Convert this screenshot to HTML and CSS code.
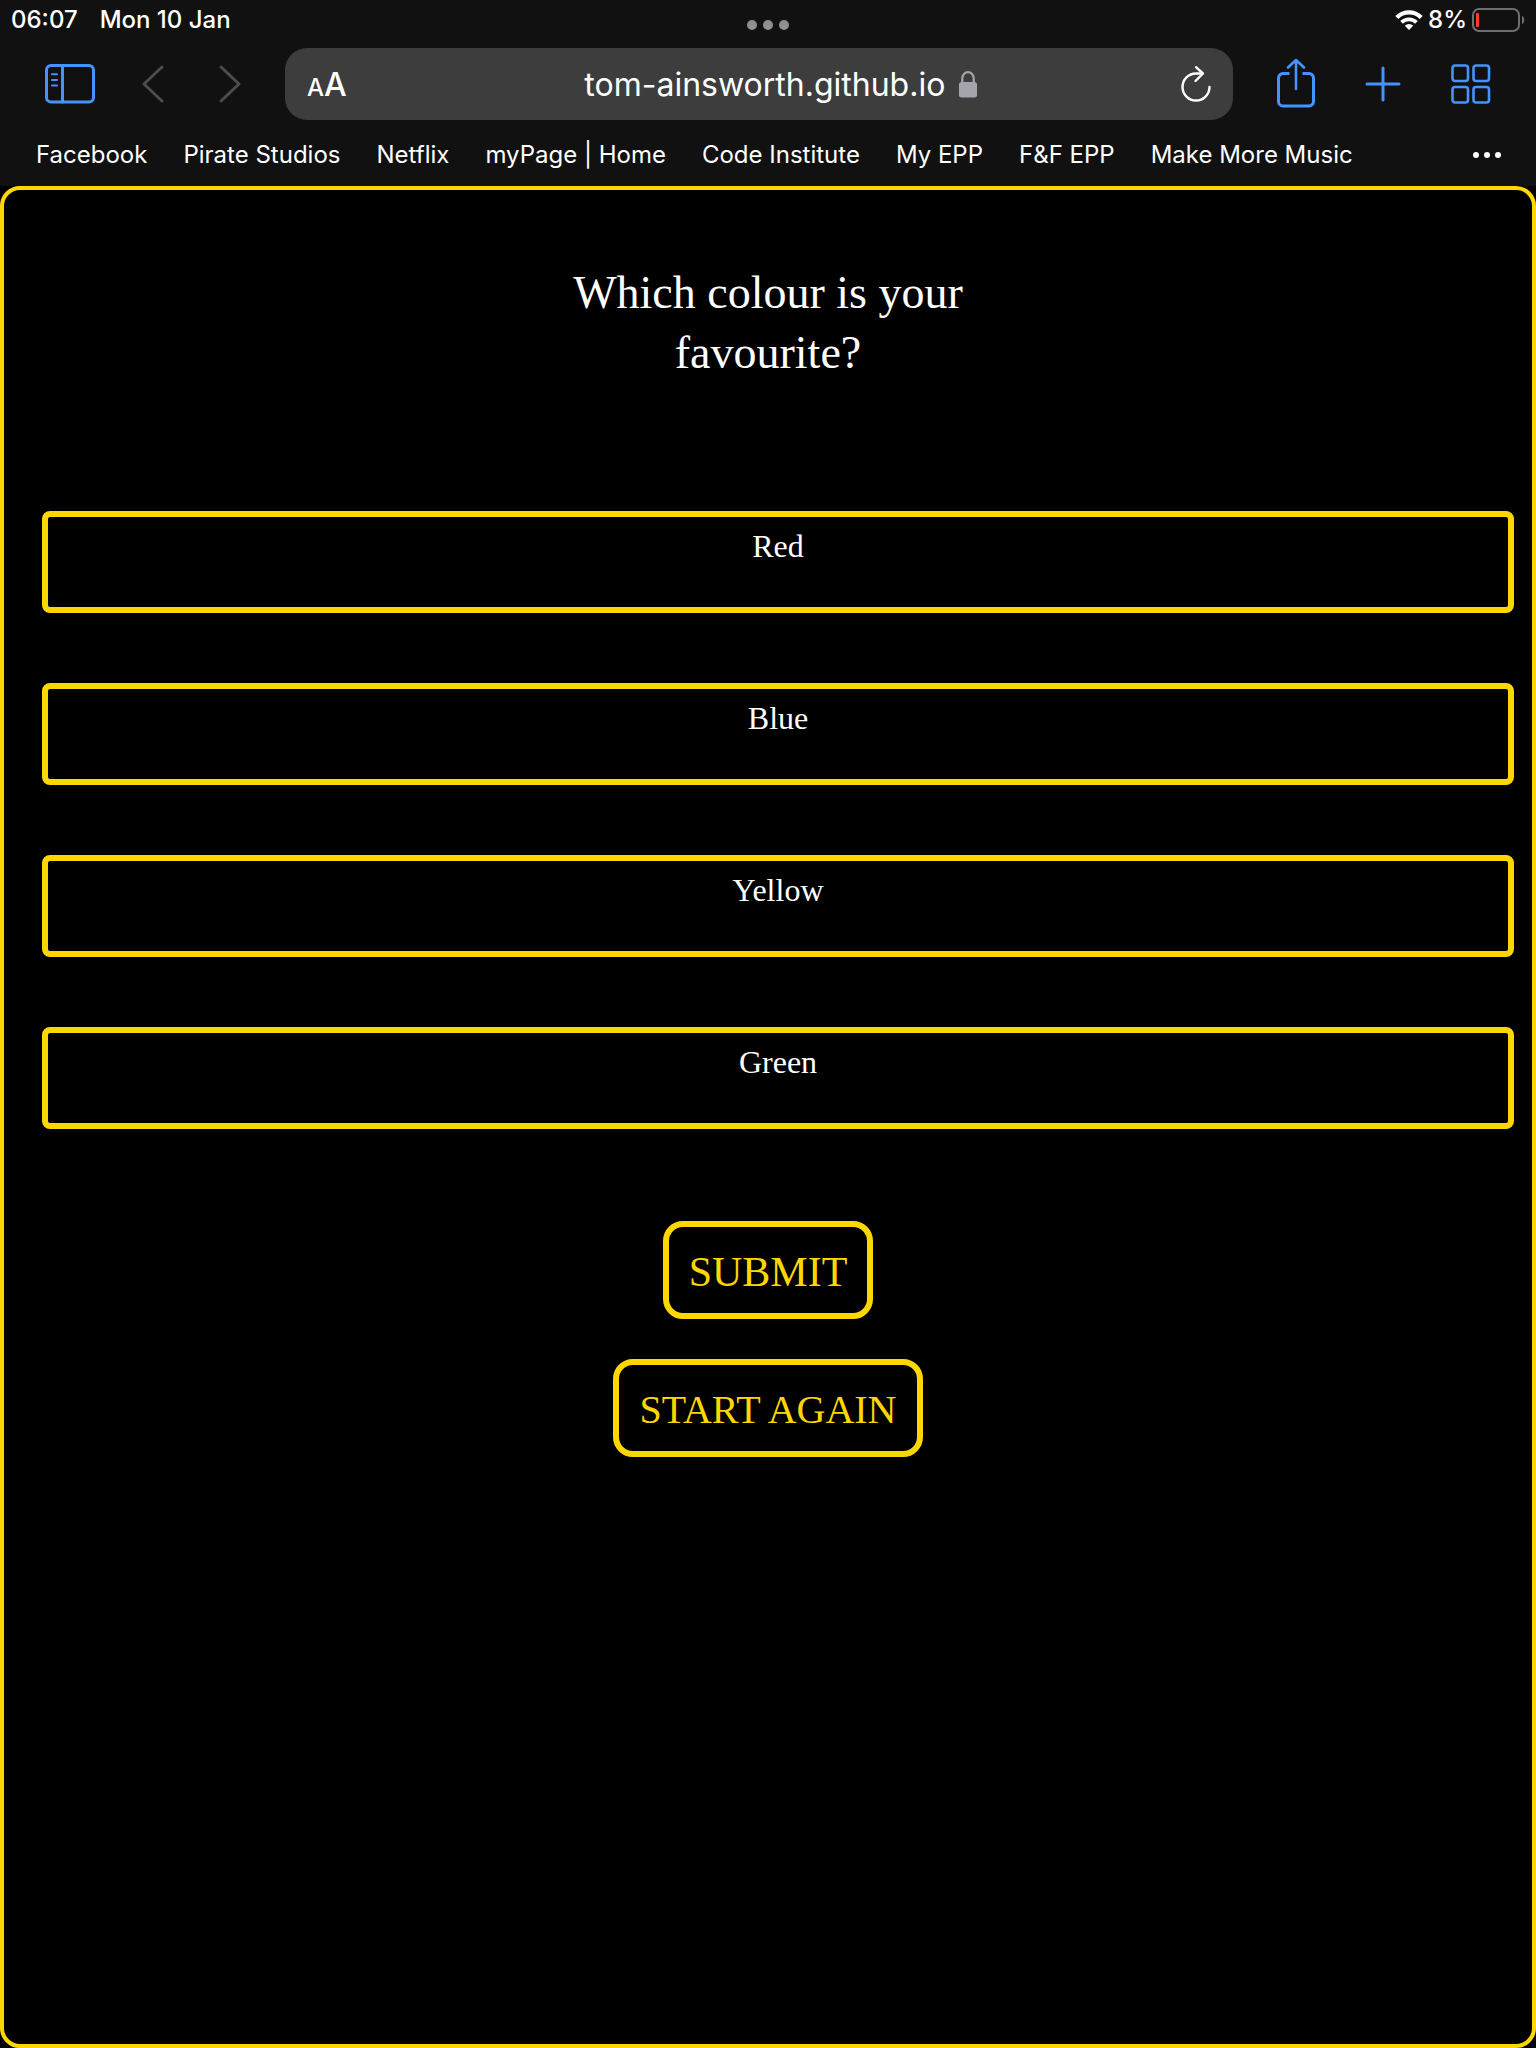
FILE: index.html
```html
<!DOCTYPE html>
<html lang="en">
<head>
<meta charset="utf-8">
<meta name="viewport" content="width=device-width, initial-scale=1">
<title>Which colour is your favourite?</title>
<link rel="stylesheet" href="styles.css">
</head>
<body>
<header class="browser">
  <div class="status">
    <div class="status-side"><span>06:07</span><span>Mon 10 Jan</span></div>
    <svg class="multitask" width="42" height="10" viewBox="0 0 42 10" fill="#8f8f8f" aria-hidden="true"><circle cx="5" cy="5" r="5"/><circle cx="21" cy="5" r="5"/><circle cx="37" cy="5" r="5"/></svg>
    <div class="status-side status-end">
      <svg width="28" height="20" viewBox="0 0 28 20" fill="none" stroke="#fff" stroke-width="4" aria-hidden="true"><path d="M1.8 7.4a17.4 17.4 0 0 1 24.4 0" stroke-width="4.2"/><path d="M6.6 12.3a10.6 10.6 0 0 1 14.8 0" stroke-width="3.8"/><path d="M14 20l-4.2-4.3a6.2 6.2 0 0 1 8.4 0z" fill="#fff" stroke="none"/></svg>
      <span>8%</span>
      <svg width="53" height="24" viewBox="0 0 53 24" aria-hidden="true"><rect x="1" y="1" width="46" height="22" rx="6" fill="none" stroke="#6f6f6f" stroke-width="2"/><rect x="4" y="5" width="3" height="14" rx="1" fill="#ff3b30"/><path d="M50 8c3 1 3 7 0 8z" fill="#6f6f6f"/></svg>
    </div>
  </div>
  <div class="toolbar">
    <div class="nav">
      <button class="tool" type="button" aria-label="Sidebar"><svg width="50" height="40" viewBox="0 0 50 40" fill="none" stroke="#4593ff" stroke-width="3" stroke-linecap="round"><rect x="1.5" y="1.5" width="47" height="36.5" rx="4.5"/><path d="M17.5 2v36"/><path d="M7 10.3h5M7 16h5M7 21.6h5" stroke-width="2"/></svg></button>
      <button class="tool" type="button" aria-label="Back"><svg width="22" height="38" viewBox="0 0 22 38" fill="none" stroke="#4c4c4c" stroke-width="3" stroke-linecap="round" stroke-linejoin="round"><path d="M20 2L2 19l18 17"/></svg></button>
      <button class="tool forward" type="button" aria-label="Forward"><svg width="22" height="38" viewBox="0 0 22 38" fill="none" stroke="#4c4c4c" stroke-width="3" stroke-linecap="round" stroke-linejoin="round"><path d="M2 2l18 17L2 36"/></svg></button>
    </div>
    <div class="address">
      <button class="tool reader" type="button" aria-label="Text size"><span class="small-a">A</span><span>A</span></button>
      <div class="url">
        <input class="url-text" type="text" aria-label="Address" value="tom-ainsworth.github.io">
        <svg width="18" height="27" viewBox="0 0 18 27" aria-hidden="true"><rect y="11" width="18" height="15.5" rx="2.5" fill="#a5a4ac"/><path d="M3.3 12V7.5a5.7 6.3 0 0 1 11.4 0V12" fill="none" stroke="#a5a4ac" stroke-width="2.2"/></svg>
      </div>
      <button class="tool" type="button" aria-label="Reload"><svg width="30" height="38" viewBox="0 0 30 38" fill="none" stroke="#fff" stroke-width="2.4" stroke-linecap="round" stroke-linejoin="round"><path d="M28.5 22A13.5 13.5 0 1 1 15 8.500H21"/><path d="M15 2.200l7 6.300-7.500 7.500"/></svg></button>
    </div>
    <div class="actions">
      <button class="tool share" type="button" aria-label="Share"><svg width="38" height="50" viewBox="0 0 38 50" fill="none" stroke="#4593ff" stroke-width="3" stroke-linecap="round" stroke-linejoin="round"><path d="M12.500 15.500H6A4.500 4.500 0 0 0 1.500 20V43.500A4.500 4.500 0 0 0 6 48H32A4.500 4.500 0 0 0 36.500 43.500V20A4.500 4.500 0 0 0 32 15.500H25.500" stroke-linecap="butt"/><path d="M19 31V2M11 9.500l8-7.500 8 7.500" stroke-width="2.600"/></svg></button>
      <button class="tool" type="button" aria-label="New tab"><svg width="36" height="36" viewBox="0 0 36 36" fill="none" stroke="#4593ff" stroke-width="3" stroke-linecap="round"><path d="M18 2v32M2 18h32"/></svg></button>
      <button class="tool" type="button" aria-label="All tabs"><svg width="40" height="40" viewBox="0 0 40 40" fill="none" stroke="#4593ff" stroke-width="2.600"><rect x="1.500" y="1.500" width="15.500" height="15.500" rx="2.500"/><rect x="22.500" y="1.500" width="15.500" height="15.500" rx="2.500"/><rect x="1.500" y="23" width="15.500" height="15.500" rx="2.500"/><rect x="22.500" y="23" width="15.500" height="15.500" rx="2.500"/></svg></button>
    </div>
  </div>
  <nav class="bookmarks">
    <a href="#">Facebook</a><a href="#">Pirate Studios</a><a href="#">Netflix</a><a href="#">myPage | Home</a><a href="#">Code Institute</a><a href="#">My EPP</a><a href="#">F&amp;F EPP</a><a href="#">Make More Music</a>
    <button class="tool more" type="button" aria-label="More bookmarks"><svg width="28" height="6" viewBox="0 0 28 6" fill="#fff"><circle cx="3" cy="3" r="3"/><circle cx="14" cy="3" r="3"/><circle cx="25" cy="3" r="3"/></svg></button>
  </nav>
</header>
<main class="quiz">
  <h1 class="question">Which colour is your favourite?</h1>
  <div class="options">
    <button class="option" type="button">Red</button>
    <button class="option" type="button">Blue</button>
    <button class="option" type="button">Yellow</button>
    <button class="option" type="button">Green</button>
  </div>
  <div class="controls">
    <button class="control submit" type="submit">SUBMIT</button>
    <button class="control" type="button">START AGAIN</button>
  </div>
</main>
</body>
</html>
```
FILE: styles.css
```css
* {
  box-sizing: border-box;
}

body {
  margin: 0;
  min-height: 100vh;
  display: flex;
  flex-direction: column;
  background: #000;
  color: #fff;
}

button {
  cursor: pointer;
}

svg {
  display: block;
  flex: none;
}

.browser {
  background: #111;
  font-family: Inter, "Liberation Sans", sans-serif;
}

.status {
  display: flex;
  align-items: center;
  justify-content: space-between;
  height: 40px;
  padding: 0 11px;
  font-size: 24px;
  line-height: 28px;
  font-weight: 500;
}

.status-side {
  flex: 1;
  display: flex;
  align-items: center;
  gap: 22px;
}

.status-end {
  justify-content: flex-end;
  gap: 5px;
}

.multitask {
  margin-top: 10px;
}

.toolbar {
  display: flex;
  align-items: center;
  gap: 44px;
  padding: 8px 45px 0;
}

.tool {
  padding: 0;
  border: 0;
  background: none;
  color: #fff;
  font: inherit;
}

.nav,
.actions {
  display: flex;
  align-items: center;
  gap: 47px;
}

.actions {
  gap: 50px;
}

.forward {
  margin-left: 8px;
}

.share {
  padding-bottom: 2px;
}

.address {
  flex: 1;
  display: flex;
  align-items: center;
  height: 72px;
  padding: 0 22px;
  border-radius: 22px;
  background: #3d3d3d;
}

.reader {
  display: flex;
  align-items: baseline;
  padding-top: 4px;
  font-size: 32px;
  line-height: 40px;
  font-weight: 500;
}

.small-a {
  font-size: 24px;
}

.url {
  flex: 1;
  display: flex;
  align-items: center;
  justify-content: center;
  gap: 14px;
  padding-left: 34px;
}

.url-text {
  field-sizing: content;
  padding: 2px 0 0;
  border: 0;
  outline: 0;
  background: none;
  color: #fff;
  font-family: inherit;
  font-size: 32px;
  line-height: 40px;
}

.bookmarks {
  display: flex;
  align-items: center;
  gap: 36px;
  height: 66px;
  padding: 4px 35px 0 36px;
  font-size: 24px;
  line-height: 30px;
}

.bookmarks a {
  color: #fff;
  text-decoration: none;
  white-space: nowrap;
}

.more {
  margin-left: auto;
}

.quiz {
  flex: 1;
  padding: 73px 0 70px;
  border: 4px solid #ffd700;
  border-radius: 20px;
  font-family: "Liberation Serif", "Times New Roman", serif;
  text-align: center;
}

.question {
  max-width: 460px;
  margin: 0 auto 128px;
  font-size: 46px;
  line-height: 60px;
  font-weight: 400;
}

.options {
  display: flex;
  flex-direction: column;
  gap: 70px;
  margin: 0 18px 92px 38px;
}

.option {
  padding: 10px 0 42px;
  border: 6px solid #ffd700;
  border-radius: 8px;
  background: #000;
  color: #fff;
  font-family: inherit;
  font-size: 32px;
  line-height: 38px;
}

.controls {
  display: flex;
  flex-direction: column;
  align-items: center;
  gap: 40px;
}

.control {
  padding: 22px 20px 18px;
  border: 6px solid #ffd700;
  border-radius: 20px;
  background: #000;
  color: #ffd700;
  font-family: inherit;
  font-size: 40px;
  line-height: 46px;
}

.submit {
  font-size: 42px;
}
```
